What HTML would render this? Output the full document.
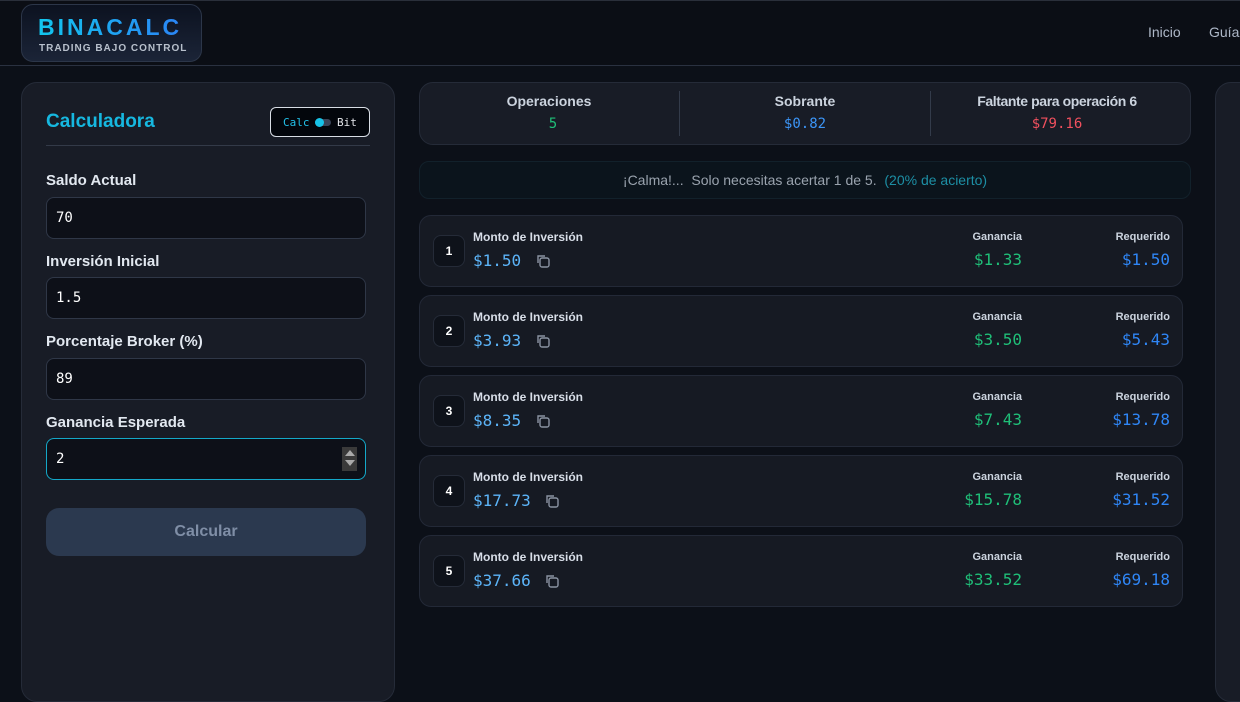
<!DOCTYPE html>
<html><head><meta charset="utf-8"><style>
*{box-sizing:border-box;margin:0;padding:0}
body{width:1240px;height:667px;overflow:hidden;background:#0c1018;font-family:"Liberation Sans",sans-serif;color:#e2e8f0;position:relative}
.hdr{position:absolute;left:0;top:0;width:1240px;height:66px;border-top:1px solid #2a2f3a;border-bottom:1px solid #2a3140;background:#0b0e15}
.logo{position:absolute;left:21px;top:4px;width:181px;height:58px;border:1px solid #2c3649;border-radius:12px;background:linear-gradient(#0c1220,#1b2437)}
.logo .t{position:absolute;left:16px;top:9px;font-weight:bold;font-size:23px;letter-spacing:3px;background:linear-gradient(90deg,#12c6ee,#2b84f5);-webkit-background-clip:text;color:transparent}
.logo .s{position:absolute;left:17px;top:38px;font-size:10px;font-weight:bold;letter-spacing:1px;color:#b8c0cc}
.nav{position:absolute;top:24px;font-size:14px;color:#aeb8c8}
.panel{position:absolute;background:#181c26;border:1px solid #252b38;border-radius:16px}
.lbl{position:absolute;left:46px;font-weight:bold;font-size:15px;color:#e2e8f0}
.inp{position:absolute;left:46px;width:320px;height:42px;border:1px solid #2f3747;border-radius:8px;background:#0d1018;font-family:"DejaVu Sans Mono",monospace;font-size:14px;color:#fff;padding:12px 9px}
.mono{font-family:"DejaVu Sans Mono",monospace}
.row{position:absolute;left:419px;width:764px;height:72px;background:#161a23;border:1px solid #232937;border-radius:12px}
.num{position:absolute;left:13px;top:19px;width:32px;height:32px;border:1px solid #252b38;border-radius:8px;background:#0e121a;font-size:12px;font-weight:bold;text-align:center;line-height:30px;color:#fff}
.mt{position:absolute;left:53px;top:14px;font-size:12px;font-weight:bold;color:#d8dee8}
.mv{position:absolute;left:53px;top:35px;font-size:16px;color:#5cb4f8}
.cp{position:absolute;top:37px;width:16px;height:16px}
.g{position:absolute;right:160px;font-size:11px;font-weight:bold;color:#cbd3de;text-align:right}
.r{position:absolute;right:12px;font-size:11px;font-weight:bold;color:#cbd3de;text-align:right}
.gv{position:absolute;right:160px;top:34px;font-size:16px;color:#1fbf78}
.rv{position:absolute;right:12px;top:34px;font-size:16px;color:#2f86f6}
</style></head><body>
<div class="hdr"></div>
<div class="logo"><div class="t">BINACALC</div><div class="s">TRADING BAJO CONTROL</div></div>
<div class="nav" style="left:1148px">Inicio</div>
<div class="nav" style="left:1209px">Guía</div>

<div class="panel" style="left:21px;top:82px;width:374px;height:620px"></div>
<div style="position:absolute;left:46px;top:111px;font-size:19px;font-weight:bold;color:#16b8e0">Calculadora</div>
<div style="position:absolute;left:270px;top:107px;width:100px;height:30px;border:1px solid #d8dde5;border-radius:6px;background:#03060c"></div>
<div class="mono" style="position:absolute;left:283px;top:116px;font-size:11px;color:#22c0e8">Calc</div>
<div style="position:absolute;left:315px;top:119px;width:16px;height:7px;border-radius:4px;background:#3a4458"></div>
<div style="position:absolute;left:315px;top:118px;width:9px;height:9px;border-radius:50%;background:#17c3e8"></div>
<div class="mono" style="position:absolute;left:337px;top:116px;font-size:11px;color:#e5e7eb">Bit</div>
<div style="position:absolute;left:46px;top:145px;width:324px;height:1px;background:#333a48"></div>

<div class="lbl" style="top:172px">Saldo Actual</div>
<div class="inp" style="top:197px">70</div>
<div class="lbl" style="top:253px">Inversión Inicial</div>
<div class="inp" style="top:277px">1.5</div>
<div class="lbl" style="top:333px">Porcentaje Broker (%)</div>
<div class="inp" style="top:358px">89</div>
<div class="lbl" style="top:414px">Ganancia Esperada</div>
<div class="inp" style="top:438px;border-color:#14a8c8">2</div>
<div style="position:absolute;left:342px;top:447px;width:15px;height:24px;background:#3a3a3a"><div style="margin:3px auto 0;width:0;height:0;border-left:5px solid transparent;border-right:5px solid transparent;border-bottom:6px solid #aaa"></div><div style="margin:4px auto 0;width:0;height:0;border-left:5px solid transparent;border-right:5px solid transparent;border-top:6px solid #aaa"></div></div>
<div style="position:absolute;left:46px;top:508px;width:320px;height:48px;border-radius:13px;background:#2b394f;text-align:center;line-height:48px;font-weight:bold;font-size:16px;color:#7f8ea6">Calcular</div>

<div class="panel" style="left:1215px;top:82px;width:60px;height:620px"></div>

<div class="panel" style="left:419px;top:82px;width:772px;height:63px;border-radius:14px"></div>
<div style="position:absolute;left:679px;top:91px;width:1px;height:45px;background:#333b4a"></div>
<div style="position:absolute;left:930px;top:91px;width:1px;height:45px;background:#333b4a"></div>
<div style="position:absolute;left:419px;width:260px;top:93px;text-align:center;font-size:14px;font-weight:bold;color:#cbd3de">Operaciones</div>
<div class="mono" style="position:absolute;left:419px;width:268px;top:116px;text-align:center;font-size:14px;color:#1fbf78">5</div>
<div style="position:absolute;left:680px;width:250px;top:93px;text-align:center;font-size:14px;font-weight:bold;color:#cbd3de">Sobrante</div>
<div class="mono" style="position:absolute;left:680px;width:250px;top:116px;text-align:center;font-size:14px;color:#3c95f6">$0.82</div>
<div style="position:absolute;left:931px;width:252px;top:93px;text-align:center;font-size:14px;font-weight:bold;color:#cbd3de;letter-spacing:-0.4px">Faltante para operación 6</div>
<div class="mono" style="position:absolute;left:931px;width:252px;top:116px;text-align:center;font-size:14px;color:#f0505e">$79.16</div>

<div style="position:absolute;left:419px;top:161px;width:772px;height:38px;border:1px solid #12212b;border-radius:10px;background:#0b141c;text-align:center;line-height:36px;font-size:14px;color:#9aa3ae">¡Calma!...&nbsp; Solo necesitas acertar 1 de 5.&nbsp; <span style="color:#1d8fa5">(20% de acierto)</span></div>

<div class="row" style="top:215px"><div class="num">1</div><div class="mt">Monto de Inversión</div><div class="mv mono">$1.50</div><svg class="cp" style="left:115px" viewBox="0 0 16 16" fill="none" stroke="#8a93a2" stroke-width="1.4"><rect x="5" y="5" width="9" height="9" rx="2"/><path d="M3 10V3h7"/></svg><div class="g" style="top:15px">Ganancia</div><div class="r" style="top:15px">Requerido</div><div class="gv mono">$1.33</div><div class="rv mono">$1.50</div></div>
<div class="row" style="top:295px"><div class="num">2</div><div class="mt">Monto de Inversión</div><div class="mv mono">$3.93</div><svg class="cp" style="left:115px" viewBox="0 0 16 16" fill="none" stroke="#8a93a2" stroke-width="1.4"><rect x="5" y="5" width="9" height="9" rx="2"/><path d="M3 10V3h7"/></svg><div class="g" style="top:15px">Ganancia</div><div class="r" style="top:15px">Requerido</div><div class="gv mono">$3.50</div><div class="rv mono">$5.43</div></div>
<div class="row" style="top:375px"><div class="num">3</div><div class="mt">Monto de Inversión</div><div class="mv mono">$8.35</div><svg class="cp" style="left:115px" viewBox="0 0 16 16" fill="none" stroke="#8a93a2" stroke-width="1.4"><rect x="5" y="5" width="9" height="9" rx="2"/><path d="M3 10V3h7"/></svg><div class="g" style="top:15px">Ganancia</div><div class="r" style="top:15px">Requerido</div><div class="gv mono">$7.43</div><div class="rv mono">$13.78</div></div>
<div class="row" style="top:455px"><div class="num">4</div><div class="mt">Monto de Inversión</div><div class="mv mono">$17.73</div><svg class="cp" style="left:124px" viewBox="0 0 16 16" fill="none" stroke="#8a93a2" stroke-width="1.4"><rect x="5" y="5" width="9" height="9" rx="2"/><path d="M3 10V3h7"/></svg><div class="g" style="top:15px">Ganancia</div><div class="r" style="top:15px">Requerido</div><div class="gv mono">$15.78</div><div class="rv mono">$31.52</div></div>
<div class="row" style="top:535px"><div class="num">5</div><div class="mt">Monto de Inversión</div><div class="mv mono">$37.66</div><svg class="cp" style="left:124px" viewBox="0 0 16 16" fill="none" stroke="#8a93a2" stroke-width="1.4"><rect x="5" y="5" width="9" height="9" rx="2"/><path d="M3 10V3h7"/></svg><div class="g" style="top:15px">Ganancia</div><div class="r" style="top:15px">Requerido</div><div class="gv mono">$33.52</div><div class="rv mono">$69.18</div></div>
</body></html>
